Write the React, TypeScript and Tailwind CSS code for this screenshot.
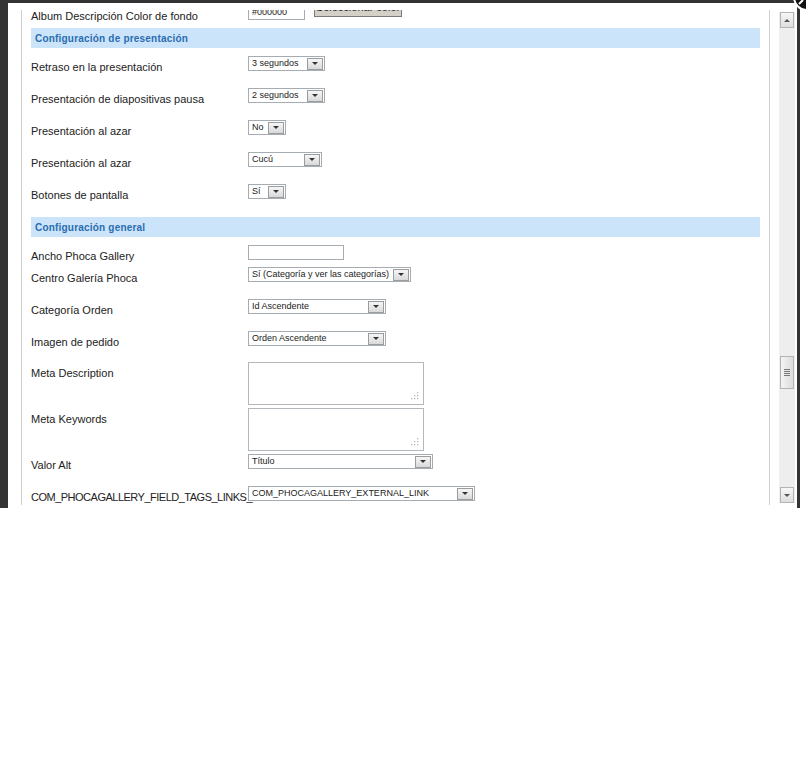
import React from "react";

const FONT = { fontFamily: '"Liberation Sans", Arial, sans-serif' };

function Arrow() {
  return (
    <div className="w-[16px] h-[12px] mr-[1px] border border-[#9c9c9c] bg-gradient-to-b from-[#f6f6f6] to-[#d9d9d9] flex items-center justify-center">
      <div className="w-0 h-0 border-x-[3px] border-x-transparent border-t-[3px] border-t-[#333]" />
    </div>
  );
}

function Select({ w, text }: { w: string; text: string }) {
  return (
    <div className={`${w} h-[15px] border border-[#a5acb2] bg-white flex items-center justify-between shrink-0`}>
      <span className="pl-[3px] text-[9px] leading-[13px] text-[#222] whitespace-nowrap">{text}</span>
      <Arrow />
    </div>
  );
}

function Grip() {
  return (
    <svg width="9" height="9" viewBox="0 0 9 9" className="absolute right-[4px] bottom-[4px]">
      {[
        [7, 1],
        [7, 4],
        [4, 4],
        [7, 7],
        [4, 7],
        [1, 7],
      ].map(([x, y], i) => (
        <rect key={i} x={x} y={y} width="1.3" height="1.3" fill="#b8b8b8" />
      ))}
    </svg>
  );
}

function Textarea() {
  return <div className="relative w-[176px] h-[43px] border border-[#b3b8bd] bg-white shrink-0"><Grip /></div>;
}

function Row({ h, label, children, labelClass = "" }: { h: string; label: string; children: React.ReactNode; labelClass?: string }) {
  return (
    <div className={`${h} flex items-start`}>
      <div className={`w-[217px] shrink-0 pt-[5px] text-[11px] leading-[12px] text-[#222] whitespace-nowrap ${labelClass}`}>{label}</div>
      <div className="relative z-10 flex items-start">{children}</div>
    </div>
  );
}

function Header({ text }: { text: string }) {
  return (
    <div className="h-[20px] bg-[#cbe4fa] pl-[4px] text-[10px] leading-[21px] font-bold text-[#2a6db0] tracking-[0.2px]">{text}</div>
  );
}

function ScrollBtn({ up }: { up: boolean }) {
  return (
    <div className="h-[16px] mx-[1px] border border-[#b4b4b4] bg-gradient-to-b from-[#f7f7f7] to-[#dedede] flex items-center justify-center">
      {up ? (
        <div className="w-0 h-0 border-x-[3px] border-x-transparent border-b-[3px] border-b-[#555]" />
      ) : (
        <div className="w-0 h-0 border-x-[3px] border-x-transparent border-t-[3px] border-t-[#555]" />
      )}
    </div>
  );
}

export default function App() {
  return (
    <div className="relative w-[806px] h-[757px] bg-white overflow-hidden" style={FONT}>
      <div className="w-[800px] h-[508px] border-l-[8px] border-t-[3px] border-r-[3px] border-[#333] bg-white">
        <div className="flex pt-[7px] pl-[13px] pr-[2px]">
          <div className="w-[749px] h-[495px] border-x border-[#cfcfcf] overflow-hidden px-[9px]">
            <div className="mt-[-5px]">
              <Row h="h-[23px]" label="Album Descripción Color de fondo">
                <div className="w-[57px] h-[15px] border border-[#a5acb2] bg-white pl-[3px] text-[9px] leading-[13px] text-[#222]">#000000</div>
                <div className="ml-[9px] mt-[-7px] w-[88px] h-[19px] border border-[#7a7a7a] bg-[#d4d0c8] text-[11px] leading-[17px] text-center text-[#222]">Seleccionar color</div>
              </Row>
              <Header text="Configuración de presentación" />
              <div className="h-[8px]" />
              <Row h="h-[32px]" label="Retraso en la presentación"><Select w="w-[77px]" text="3 segundos" /></Row>
              <Row h="h-[32px]" label="Presentación de diapositivas pausa"><Select w="w-[77px]" text="2 segundos" /></Row>
              <Row h="h-[32px]" label="Presentación al azar"><Select w="w-[38px]" text="No" /></Row>
              <Row h="h-[32px]" label="Presentación al azar"><Select w="w-[74px]" text="Cucú" /></Row>
              <Row h="h-[33px]" label="Botones de pantalla"><Select w="w-[38px]" text="Sí" /></Row>
              <Header text="Configuración general" />
              <div className="h-[8px]" />
              <Row h="h-[22px]" label="Ancho Phoca Gallery">
                <div className="w-[96px] h-[15px] border border-[#a5acb2] bg-white" />
              </Row>
              <Row h="h-[32px]" label="Centro Galería Phoca"><Select w="w-[163px]" text="Sí (Categoría y ver las categorías)" /></Row>
              <Row h="h-[32px]" label="Categoría Orden"><Select w="w-[138px]" text="Id Ascendente" /></Row>
              <Row h="h-[31px]" label="Imagen de pedido"><Select w="w-[138px]" text="Orden Ascendente" /></Row>
              <Row h="h-[46px]" label="Meta Description"><Textarea /></Row>
              <Row h="h-[46px]" label="Meta Keywords"><Textarea /></Row>
              <Row h="h-[32px]" label="Valor Alt"><Select w="w-[185px]" text="Título" /></Row>
              <div className="h-[32px] flex items-start">
                <div className="w-[217px] shrink-0 pt-[5px] text-[11px] leading-[12px] text-[#222] whitespace-nowrap tracking-[-0.5px] relative z-20">COM_PHOCAGALLERY_FIELD_TAGS_LINKS_</div>
                <div className="relative z-10 flex items-start"><Select w="w-[227px]" text="COM_PHOCAGALLERY_EXTERNAL_LINK" /></div>
              </div>
            </div>
          </div>
          <div className="w-[9px]" />
          <div className="w-[16px] h-[491px] mt-[2px] bg-[#eeeeee] flex flex-col">
            <ScrollBtn up={true} />
            <div className="h-[328px]" />
            <div className="h-[33px] mx-[1px] border border-[#b4b4b4] bg-gradient-to-r from-[#f4f4f4] to-[#dcdcdc] flex flex-col items-center justify-center gap-[1px]">
              <div className="w-[6px] h-[1px] bg-[#777]" />
              <div className="w-[6px] h-[1px] bg-[#777]" />
              <div className="w-[6px] h-[1px] bg-[#777]" />
              <div className="w-[6px] h-[1px] bg-[#777]" />
            </div>
            <div className="flex-1" />
            <ScrollBtn up={false} />
          </div>
        </div>
      </div>
      <svg className="absolute left-[790px] top-0" width="16" height="12" viewBox="0 0 16 12">
        <circle cx="17" cy="-3" r="13" fill="#111" stroke="#fff" strokeWidth="2" />
        <path d="M9 4 L13 0" stroke="#fff" strokeWidth="2" />
      </svg>
    </div>
  );
}
